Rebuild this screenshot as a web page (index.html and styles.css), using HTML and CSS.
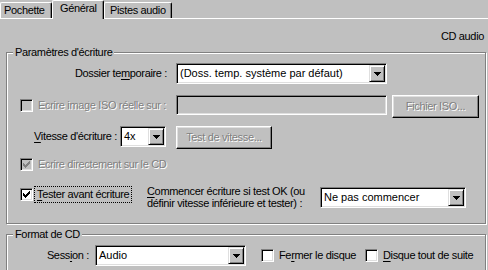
FILE: index.html
```html
<!DOCTYPE html>
<html>
<head>
    <title>Propriétés - Général</title>
    <link rel="stylesheet" href="styles.css">
</head>
<body>
    <div class="tabs">
        <div class="tab tab-pochette">Pochette</div>
        <div class="tab tab-general active">Général</div>
        <div class="tab tab-pistes">Pistes audio</div>
    </div>
    <div class="panel">
        <div class="mode">CD audio</div>

        <div class="group group-write">
            <div class="group-title">Paramètres d'écriture</div>
            <div class="row row-folder">
                <span class="label label-folder">Dossier te<u>m</u>poraire :</span>
                <div class="combo combo-folder">
                    <span class="combo-text">(Doss. temp. système par défaut)</span>
                    <span class="combo-btn"><svg width="7" height="4" viewBox="0 0 7 4"><path d="M0 0h7v1h-7z M1 1h5v1h-5z M2 2h3v1h-3z M3 3h1v1h-1z"/></svg></span>
                </div>
            </div>
            <div class="row row-iso">
                <div class="check-line check-iso disabled">
                    <span class="cb"></span>
                    <span class="cb-text">Ecrire image ISO réelle sur :</span>
                </div>
                <div class="field field-iso"></div>
                <div class="btn btn-iso disabled">Fichier ISO...</div>
            </div>
            <div class="row row-speed">
                <span class="label label-speed"><u>V</u>itesse d'écriture :</span>
                <div class="combo combo-speed">
                    <span class="combo-text">4x</span>
                    <span class="combo-btn"><svg width="7" height="4" viewBox="0 0 7 4"><path d="M0 0h7v1h-7z M1 1h5v1h-5z M2 2h3v1h-3z M3 3h1v1h-1z"/></svg></span>
                </div>
                <div class="btn btn-speed disabled">Test de vitesse...</div>
            </div>
            <div class="row row-direct">
                <div class="check-line disabled">
                    <span class="cb"><svg width="7" height="7" viewBox="0 0 7 7"><path d="M6 0h1v1h-1z M5 1h2v1h-2z M0 2h1v1h-1z M4 2h3v1h-3z M0 3h2v1h-2z M3 3h3v1h-3z M0 4h5v1h-5z M1 5h3v1h-3z M2 6h1v1h-1z"/></svg></span>
                    <span class="cb-text">Ecrire directement sur le CD</span>
                </div>
            </div>
            <div class="row row-test">
                <div class="check-line check-test">
                    <span class="cb"><svg width="7" height="7" viewBox="0 0 7 7"><path d="M6 0h1v1h-1z M5 1h2v1h-2z M0 2h1v1h-1z M4 2h3v1h-3z M0 3h2v1h-2z M3 3h3v1h-3z M0 4h5v1h-5z M1 5h3v1h-3z M2 6h1v1h-1z"/></svg></span>
                    <span class="cb-text focus"><u>T</u>ester avant écriture</span>
                </div>
                <span class="label label-start"><u>C</u>ommencer écriture si test OK (ou<br>définir vitesse inférieure et tester) :</span>
                <div class="combo combo-start">
                    <span class="combo-text">Ne pas commencer</span>
                    <span class="combo-btn"><svg width="7" height="4" viewBox="0 0 7 4"><path d="M0 0h7v1h-7z M1 1h5v1h-5z M2 2h3v1h-3z M3 3h1v1h-1z"/></svg></span>
                </div>
            </div>
        </div>

        <div class="group group-format">
            <div class="group-title">Format de CD</div>
            <div class="row row-session">
                <span class="label label-session">Sess<u>i</u>on :</span>
                <div class="combo combo-session">
                    <span class="combo-text">Audio</span>
                    <span class="combo-btn"><svg width="7" height="4" viewBox="0 0 7 4"><path d="M0 0h7v1h-7z M1 1h5v1h-5z M2 2h3v1h-3z M3 3h1v1h-1z"/></svg></span>
                </div>
                <div class="check-line check-close">
                    <span class="cb"></span>
                    <span class="cb-text">Fe<u>r</u>mer le disque</span>
                </div>
                <div class="check-line check-now">
                    <span class="cb"></span>
                    <span class="cb-text"><u>D</u>isque tout de suite</span>
                </div>
            </div>
        </div>
    </div>
</body>
</html>
```

FILE: styles.css
```css
body {
    margin: 0;
    width: 488px;
    height: 270px;
    overflow: hidden;
    background-color: #c0c0c0;
    color: #000;
    font-family: "Liberation Sans", Arial, sans-serif;
    font-size: 11px;
    letter-spacing: -0.35px;
    line-height: 13px;
}
u {
    text-decoration-thickness: 1px;
    text-underline-offset: 2px;
}

/* tabs */
.tabs {
    display: flex;
    align-items: flex-end;
    height: 18px;
}
.tab {
    box-sizing: border-box;
    height: 16px;
    border-top: 1px solid #fff;
    border-left: 1px solid #fff;
    border-right: 1px solid #000;
    border-radius: 2px 2px 0 0;
    box-shadow: inset -1px 0 #808080;
    line-height: 13px;
    padding-top: 1px;
    white-space: nowrap;
}
.tab-pochette {
    width: 52px;
    padding-left: 3px;
}
.tab-general {
    width: 52px;
    padding-left: 7px;
}
.tab-pistes {
    width: 68px;
    padding-left: 5px;
}
.tab.active {
    position: relative;
    z-index: 1;
    height: 19px;
    margin-bottom: -1px;
    background-color: #c0c0c0;
}
.panel {
    border-top: 1px solid #fff;
}
.mode {
    margin-top: 11px;
    padding-right: 4px;
    text-align: right;
}

/* group boxes */
.group {
    box-sizing: border-box;
    width: 480px;
    margin-left: 6px;
    border: 1px solid #808080;
    box-shadow: 1px 1px 0 #fff, inset 1px 1px 0 #fff;
}
.group-write {
    margin-top: 9px;
    height: 172px;
}
.group-format {
    margin-top: 10px;
    height: 38px;
}
.group-title {
    display: table;
    margin: -7px 0 0 6px;
    padding: 0 2px;
    background-color: #c0c0c0;
}

.row {
    display: flex;
    align-items: flex-start;
}
.label {
    white-space: nowrap;
}
.disabled {
    color: #808080;
    text-shadow: 1px 1px 0 #fff;
}

/* combo boxes */
.combo {
    box-sizing: border-box;
    display: flex;
    height: 21px;
    padding: 1px;
    background-color: #fff;
    border: 1px solid;
    border-color: #808080 #fff #fff #808080;
    box-shadow: inset 1px 1px #000, inset -1px -1px #dfdfdf;
    letter-spacing: 0;
}
.combo-text {
    flex: 1;
    padding-left: 2px;
    line-height: 17px;
    white-space: nowrap;
    overflow: hidden;
}
.combo-btn {
    box-sizing: border-box;
    display: flex;
    align-items: center;
    justify-content: center;
    width: 16px;
    height: 17px;
    padding-top: 1px;
    background-color: #c0c0c0;
    border: 1px solid;
    border-color: #dfdfdf #000 #000 #dfdfdf;
    box-shadow: inset 1px 1px #fff, inset -1px -1px #808080;
}

/* edit, buttons */
.field {
    box-sizing: border-box;
    height: 20px;
    background-color: #c0c0c0;
    border: 1px solid;
    border-color: #808080 #fff #fff #808080;
    box-shadow: inset 1px 1px #000, inset -1px -1px #dfdfdf;
}
.btn {
    box-sizing: border-box;
    height: 23px;
    border: 1px solid;
    border-color: #fff #000 #000 #fff;
    box-shadow: inset -1px -1px #808080, inset 1px 1px #dfdfdf;
    text-align: center;
    line-height: 20px;
}

/* checkboxes */
.check-line {
    display: flex;
    align-items: center;
}
.cb {
    box-sizing: border-box;
    flex: none;
    width: 13px;
    height: 13px;
    padding: 2px;
    background-color: #fff;
    border: 1px solid;
    border-color: #808080 #fff #fff #808080;
    box-shadow: inset 1px 1px #000, inset -1px -1px #dfdfdf;
}
.cb svg {
    display: block;
}
.disabled .cb {
    background-color: #c0c0c0;
}
.disabled .cb svg {
    fill: #808080;
}
.cb-text {
    margin-left: 5px;
    white-space: nowrap;
}
.focus {
    margin-left: 1px;
    padding: 1px 2px;
    border: 1px dotted #000;
}

/* row: temp folder */
.row-folder {
    margin-top: 4px;
    height: 21px;
    align-items: center;
}
.label-folder {
    width: 160px;
    margin-right: 9px;
    text-align: right;
}
.combo-folder {
    width: 211px;
}

/* row: iso */
.row-iso {
    margin-top: 11px;
    height: 23px;
}
.check-iso {
    width: 156px;
    height: 20px;
    padding-left: 13px;
}
.field-iso {
    width: 211px;
}
.btn-iso {
    width: 87px;
    margin-left: 5px;
}

/* row: speed */
.row-speed {
    margin-top: 8px;
    height: 23px;
}
.label-speed {
    width: 110px;
    margin-right: 3px;
    line-height: 21px;
    text-align: right;
}
.combo-speed {
    width: 46px;
}
.btn-speed {
    width: 96px;
    margin-left: 10px;
}

/* row: write direct */
.row-direct {
    margin-top: 8px;
    height: 15px;
    padding-left: 13px;
    align-items: center;
}

/* row: test */
.row-test {
    margin-top: 13px;
    height: 24px;
}
.check-test {
    width: 127px;
    padding-left: 13px;
    margin-top: 1px;
}
.label-start {
    width: 173px;
    line-height: 12px;
}
.combo-start {
    width: 146px;
    margin-top: 2px;
}

/* row: session */
.row-session {
    margin-top: 4px;
    height: 21px;
}
.label-session {
    width: 82px;
    margin-right: 6px;
    line-height: 21px;
    text-align: right;
}
.combo-session {
    width: 151px;
}
.check-close {
    width: 104px;
    margin-left: 15px;
    height: 21px;
}
.check-now {
    height: 21px;
}
```
